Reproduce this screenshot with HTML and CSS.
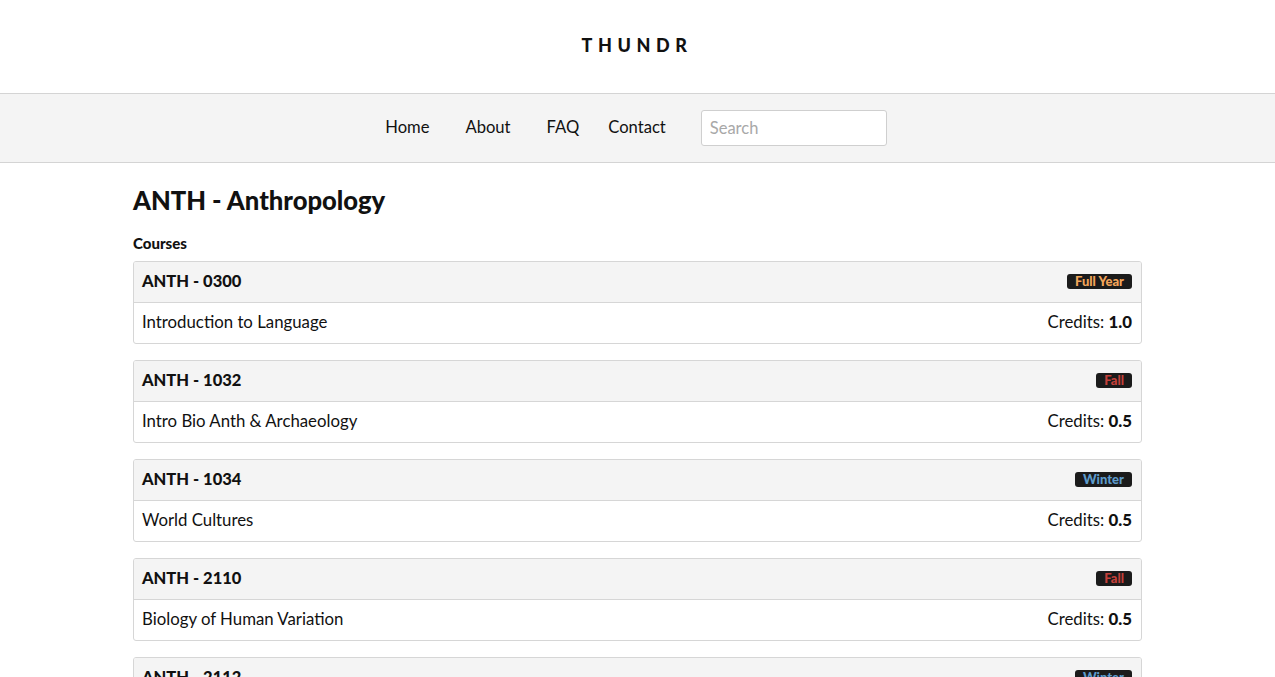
FILE: index.html
```html
<!DOCTYPE html>
<html>
<head>
<meta charset="utf-8">
<link rel="stylesheet" href="styles.css">
</head>
<body>
<header class="brand-bar">
  <div class="brand">THUNDR</div>
</header>
<nav class="nav-bar">
  <ul class="nav-links">
    <li><a href="#">Home</a></li>
    <li><a href="#">About</a></li>
    <li><a href="#">FAQ</a></li>
    <li><a href="#">Contact</a></li>
  </ul>
  <input class="search" type="text" placeholder="Search">
</nav>
<main class="container">
  <h1 class="dept-title">ANTH - Anthropology</h1>
  <h2 class="section-title">Courses</h2>
  <div class="course-list">
    <div class="panel">
      <div class="panel-head"><span class="code">ANTH - 0300</span><span class="badge badge-year">Full Year</span></div>
      <div class="panel-body"><span>Introduction to Language</span><span>Credits: <b>1.0</b></span></div>
    </div>
    <div class="panel">
      <div class="panel-head"><span class="code">ANTH - 1032</span><span class="badge badge-fall">Fall</span></div>
      <div class="panel-body"><span>Intro Bio Anth &amp; Archaeology</span><span>Credits: <b>0.5</b></span></div>
    </div>
    <div class="panel">
      <div class="panel-head"><span class="code">ANTH - 1034</span><span class="badge badge-winter">Winter</span></div>
      <div class="panel-body"><span>World Cultures</span><span>Credits: <b>0.5</b></span></div>
    </div>
    <div class="panel">
      <div class="panel-head"><span class="code">ANTH - 2110</span><span class="badge badge-fall">Fall</span></div>
      <div class="panel-body"><span>Biology of Human Variation</span><span>Credits: <b>0.5</b></span></div>
    </div>
    <div class="panel">
      <div class="panel-head"><span class="code">ANTH - 2112</span><span class="badge badge-winter">Winter</span></div>
      <div class="panel-body"><span>Human Evolution</span><span>Credits: <b>0.5</b></span></div>
    </div>
  </div>
</main>
</body>
</html>
```

FILE: styles.css
```css
* { box-sizing: border-box; }
html, body { margin: 0; padding: 0; }
body {
  font-family: "Lato", "Open Sans", sans-serif;
  color: #111;
  background: #fff;
}
.brand-bar {
  height: 94px;
  display: flex;
  align-items: center;
  justify-content: center;
  border-bottom: 1px solid #d4d4d4;
}
.brand {
  font-size: 18px;
  font-weight: 900;
  letter-spacing: 5.6px;
  margin-left: -1px;
  padding-bottom: 4px;
}
.nav-bar {
  height: 69px;
  background: #f4f4f4;
  border-bottom: 1px solid #d4d4d4;
  display: flex;
  align-items: center;
  justify-content: center;
}
.nav-links {
  list-style: none;
  margin: 0 0 0 -3px;
  padding: 0;
  display: flex;
  padding-bottom: 2px;
}
.nav-links li { margin-right: 36px; }
.nav-links li:nth-child(3) { margin-right: 29px; }
.nav-links li:nth-child(4) { margin-right: 35px; }
.nav-links a {
  color: #111;
  text-decoration: none;
  font-size: 16.6px;
}
.search {
  width: 186px;
  height: 36px;
  border: 1px solid #cfcfcf;
  border-radius: 3px;
  background: #fff;
  padding: 0 8px;
  font-family: inherit;
  font-size: 16.5px;
}
.search::placeholder { color: #a8a8a8; }
.container {
  width: 1009px;
  margin: 0 auto;
  padding-top: 20px;
}
.dept-title {
  font-size: 25.6px;
  font-weight: 900;
  margin: 0 0 17px 0;
  line-height: 34px;
}
.section-title {
  font-size: 15px;
  font-weight: 900;
  margin: 0 0 9px 0;
  line-height: 18px;
}
.panel {
  border: 1px solid #d6d6d6;
  border-radius: 3px;
  margin-bottom: 16px;
  overflow: hidden;
}
.panel-head {
  height: 41px;
  background: #f4f4f4;
  border-bottom: 1px solid #d6d6d6;
  display: flex;
  align-items: center;
  justify-content: space-between;
  padding: 0 9px 2px 8px;
}
.code {
  font-size: 16.5px;
  font-weight: 900;
}
.panel-body {
  height: 40px;
  display: flex;
  align-items: center;
  justify-content: space-between;
  padding: 0 9px 3px 8px;
  font-size: 16.8px;
}
.panel-body b { font-weight: 900; }
.badge {
  background: #1b1b1b;
  border-radius: 3px;
  font-size: 13px;
  font-weight: 900;
  padding: 0 8px;
  line-height: 15px;
}
.badge-year { color: #f2a55a; }
.badge-fall { color: #c4403a; }
.badge-winter { color: #5e9ccc; }
```
